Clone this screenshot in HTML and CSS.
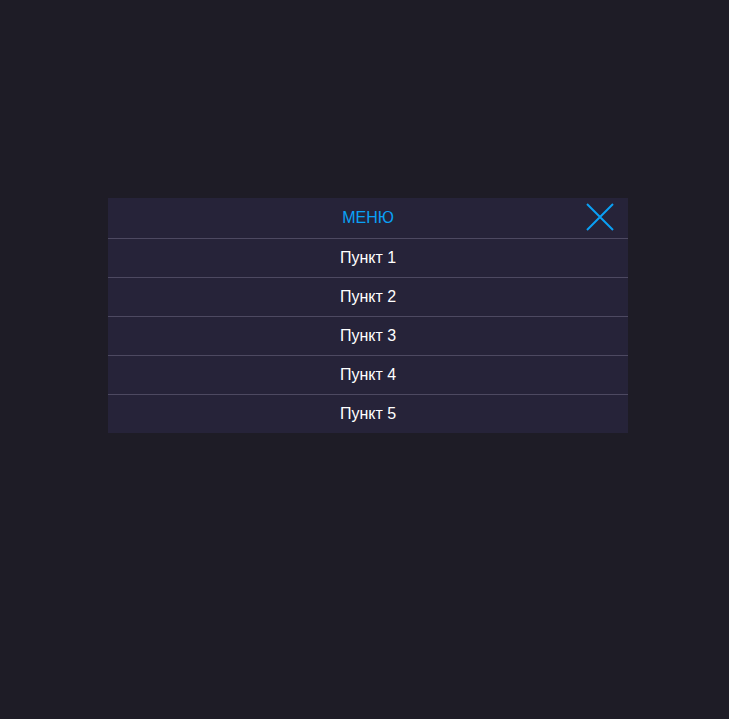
FILE: index.html
```html
<!DOCTYPE html>
<html lang="ru">
<head>
<meta charset="utf-8">
<link rel="stylesheet" href="styles.css">
</head>
<body>
<div class="page">
  <nav class="menu">
    <div class="menu-header">
      <span class="menu-title">МЕНЮ</span>
      <button class="menu-close" aria-label="Закрыть">
        <svg width="28" height="28" viewBox="0 0 28 28"><path d="M1 1 L27 27 M27 1 L1 27" stroke="#0aa0f5" stroke-width="2" fill="none"/></svg>
      </button>
    </div>
    <ul class="menu-list">
      <li class="menu-item">Пункт 1</li>
      <li class="menu-item">Пункт 2</li>
      <li class="menu-item">Пункт 3</li>
      <li class="menu-item">Пункт 4</li>
      <li class="menu-item">Пункт 5</li>
    </ul>
  </nav>
</div>
</body>
</html>
```
FILE: styles.css
```css
html, body {
  margin: 0;
  padding: 0;
  background: #1e1c26;
  height: 100%;
}
.page {
  padding: 198px 0 0 108px;
}
.menu {
  width: 520px;
  background: #262339;
  font-family: "Liberation Sans", Arial, sans-serif;
  font-size: 16px;
}
.menu-header {
  height: 40px;
  position: relative;
  display: flex;
  align-items: center;
  justify-content: center;
}
.menu-title {
  color: #0aa0f5;
}
.menu-close {
  position: absolute;
  right: 14px;
  top: 5px;
  width: 28px;
  height: 28px;
  padding: 0;
  border: 0;
  background: none;
  display: block;
}
.menu-close svg { display: block; }
.menu-list {
  list-style: none;
  margin: 0;
  padding: 0;
}
.menu-item {
  height: 38px;
  border-top: 1px solid #4d4961;
  display: flex;
  align-items: center;
  justify-content: center;
  color: #ffffff;
}
```
